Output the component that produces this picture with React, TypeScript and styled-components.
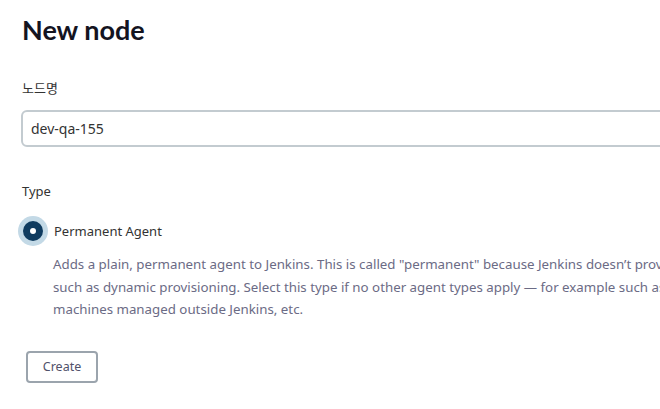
import React from "react";
import styled, { createGlobalStyle } from "styled-components";

const GlobalStyle = createGlobalStyle`
  html, body {
    margin: 0;
    padding: 0;
    background: #ffffff;
    overflow: hidden;
  }
  body {
    font-family: "Noto Sans", "Noto Sans CJK KR", sans-serif;
    color: #333333;
  }
`;

const Page = styled("div")`
  width: 1100px;
  padding: 12px 0 0 22px;
  box-sizing: border-box;
`;

const Title = styled("h1")`
  font-family: "Lato", "Noto Sans", sans-serif;
  font-size: 27px;
  font-weight: 700;
  color: #14141f;
  margin: 0 0 30px 0;
  line-height: 36px;
`;

const Field = styled("div")<{ $gap: number }>`
  display: flex;
  flex-direction: column;
  margin-bottom: ${(p) => p.$gap}px;
`;

const Label = styled("label")`
  font-size: 13px;
  line-height: 20px;
  color: #333333;
  margin-bottom: 12px;
`;

const TextInput = styled("input")`
  box-sizing: border-box;
  width: 100%;
  height: 37px;
  border: 2px solid #c3cbd0;
  border-radius: 6px;
  padding: 0 8px;
  margin-left: -1px;
  font-family: "Noto Sans", sans-serif;
  font-size: 14px;
  color: #333333;
  &:focus {
    outline: none;
  }
`;

const RadioRow = styled("label")`
  display: flex;
  align-items: center;
  gap: 6px;
  margin-left: -4px;
  margin-top: 3px;
`;

const RadioDot = styled("span")`
  width: 20px;
  height: 20px;
  border-radius: 50%;
  background: #0f3b5f;
  box-shadow: 0 0 0 5px #c3d9e6;
  display: flex;
  align-items: center;
  justify-content: center;
  margin: 5px;
  &::after {
    content: "";
    width: 6px;
    height: 6px;
    border-radius: 50%;
    background: #ffffff;
  }
`;

const RadioText = styled("span")`
  font-size: 13px;
  color: #333333;
  line-height: 20px;
`;

const Description = styled("p")`
  margin: 7px 0 0 31px;
  font-size: 13.3px;
  line-height: 22.5px;
  color: #6b6b85;
  white-space: nowrap;
`;

const CreateButton = styled("button")`
  margin: 2px 0 0 4px;
  width: 72px;
  height: 32px;
  border: 2px solid #9ba4ad;
  border-radius: 4px;
  background: #ffffff;
  font-family: "Noto Sans", sans-serif;
  font-size: 12.5px;
  color: #50516a;
  cursor: pointer;
`;

export default function App() {
  return (
    <>
      <GlobalStyle />
      <Page>
        <Title>New node</Title>
        <Field $gap={34}>
          <Label htmlFor="name">노드명</Label>
          <TextInput id="name" defaultValue="dev-qa-155" />
        </Field>
        <Field $gap={28}>
          <Label>Type</Label>
          <RadioRow>
            <RadioDot />
            <RadioText>Permanent Agent</RadioText>
          </RadioRow>
          <Description>
            Adds a plain, permanent agent to Jenkins. This is called
            "permanent" because Jenkins doesn’t provide higher level of
            integration with these agents,
            <br />
            such as dynamic provisioning. Select this type if no other agent
            types apply — for example such as when you are adding a physical
            computer, virtual
            <br />
            machines managed outside Jenkins, etc.
          </Description>
        </Field>
        <CreateButton>Create</CreateButton>
      </Page>
    </>
  );
}
